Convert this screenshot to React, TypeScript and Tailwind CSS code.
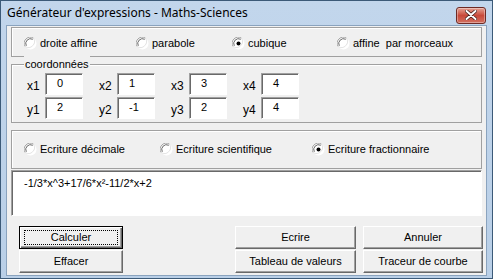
import React from 'react';

// Classic Windows dialog: "Générateur d'expressions - Maths-Sciences"

const font = { fontFamily: '"Liberation Sans", "DejaVu Sans", sans-serif' };

function Radio({ checked }: { checked?: boolean }) {
  return (
    <svg width="13" height="13" viewBox="0 0 13 13" className="shrink-0">
      <circle cx="6.5" cy="6.5" r="6" fill="#ffffff" />
      <path d="M1.2 9.5 A6 6 0 0 1 9.5 1.2" fill="none" stroke="#a0a0a0" strokeWidth="1" />
      <path d="M2.3 8.8 A4.8 4.8 0 0 1 8.8 2.3" fill="none" stroke="#696969" strokeWidth="1" />
      <path d="M9.5 1.2 A6 6 0 0 1 1.2 9.5" fill="none" stroke="#e3e3e3" strokeWidth="1" />
      {checked && <circle cx="6.5" cy="6.5" r="2" fill="#000" />}
    </svg>
  );
}

function Option({ label, checked, w }: { label: string; checked?: boolean; w: string }) {
  return (
    <div className={`flex items-center gap-[3px] ${w}`}>
      <Radio checked={checked} />
      <span className="whitespace-pre text-[11px] text-black">{label}</span>
    </div>
  );
}

function Field({ label, value }: { label: string; value: string }) {
  return (
    <div className="flex items-center">
      <span className="w-[18px] pt-[3px] text-[12px] text-black">{label}</span>
      <div className="h-[22px] w-[38px] border border-t-[#a0a0a0] border-l-[#a0a0a0] border-r-white border-b-white bg-white shadow-[inset_1px_1px_0_#696969] pl-[11px] text-[11px] leading-[18px] text-black">
        {value}
      </div>
    </div>
  );
}

function Button({ label, w, isDefault }: { label: string; w: string; isDefault?: boolean }) {
  return (
    <div
      className={`h-[23px] ${w} flex items-center justify-center bg-[#f0f0f0] text-[11px] text-black ${
        isDefault
          ? 'border border-black shadow-[inset_1px_1px_0_#fff,inset_-1px_-1px_0_#696969,inset_-2px_-2px_0_#a0a0a0]'
          : 'border border-t-white border-l-white border-r-[#696969] border-b-[#696969] shadow-[inset_-1px_-1px_0_#a0a0a0]'
      }`}
    >
      {isDefault ? (
        <div className="flex h-[15px] w-[94px] items-center justify-center border border-dotted border-black">{label}</div>
      ) : (
        label
      )}
    </div>
  );
}

export default function App() {
  return (
    <div style={font} className="flex h-[279px] w-[493px] flex-col border border-[#3c5a78] bg-gradient-to-b from-[#c2d6ec] to-[#b9cfe7]">
      {/* title bar */}
      <div className="flex h-[24px] items-center justify-between pl-[6px] pr-[6px]">
        <span className="text-[12px] text-black" style={{ fontFamily: '"Noto Sans", "Liberation Sans", sans-serif' }}>
          Générateur d'expressions - Maths-Sciences
        </span>
        <div className="mt-[4px] flex h-[17px] w-[30px] items-center justify-center rounded-[3px] border border-[#6d2a25] bg-gradient-to-b from-[#e3a194] via-[#c8493a] to-[#d26f5f] shadow-[inset_0_0_0_1px_rgba(255,255,255,0.35)]">
          <svg width="12" height="10" viewBox="0 0 12 10">
            <path d="M1.5 1 L10.5 9 M10.5 1 L1.5 9" stroke="#3b1a16" strokeWidth="3.4" strokeLinecap="round" />
            <path d="M1.5 1 L10.5 9 M10.5 1 L1.5 9" stroke="#ffffff" strokeWidth="2" strokeLinecap="round" />
          </svg>
        </div>
      </div>

      {/* client */}
      <div className="mx-[5px] mb-[2px] flex flex-1 flex-col border border-[#8aa3be] bg-[#f0f0f0] px-[4px] pt-[1px]">
        {/* type group */}
        <div className="flex h-[30px] items-center border border-[#a0a0a0] pl-[12px] pt-[2px] shadow-[inset_1px_1px_0_#fff]">
          <Option label="droite affine" w="w-[112px]" />
          <Option label="parabole" w="w-[96px]" />
          <Option label="cubique" w="w-[105px]" checked />
          <Option label="affine  par morceaux" w="w-[130px]" />
        </div>

        {/* coordinates group */}
        <div className="relative mt-[7px] h-[59px] border border-[#a0a0a0] shadow-[inset_1px_1px_0_#fff]">
          <span className="absolute left-[12px] top-[-9px] bg-[#f0f0f0] px-[1px] text-[11px] text-black">coordonnées</span>
          <div className="flex gap-[16px] pl-[15px] pt-[8px]">
            <div className="flex flex-col gap-[2px]">
              <Field label="x1" value="0" />
              <Field label="y1" value="2" />
            </div>
            <div className="flex flex-col gap-[2px]">
              <Field label="x2" value="1" />
              <Field label="y2" value="-1" />
            </div>
            <div className="flex flex-col gap-[2px]">
              <Field label="x3" value="3" />
              <Field label="y3" value="2" />
            </div>
            <div className="flex flex-col gap-[2px]">
              <Field label="x4" value="4" />
              <Field label="y4" value="4" />
            </div>
          </div>
        </div>

        {/* notation group */}
        <div className="mt-[7px] flex h-[39px] items-center border border-[#a0a0a0] pl-[12px] shadow-[inset_1px_1px_0_#fff]">
          <Option label="Ecriture décimale" w="w-[136px]" />
          <Option label="Ecriture scientifique" w="w-[152px]" />
          <Option label="Ecriture fractionnaire" w="w-[150px]" checked />
        </div>

        {/* result */}
        <div className="mt-[1px] h-[46px] border border-t-[#a0a0a0] border-l-[#a0a0a0] border-r-white border-b-white bg-white pl-[12px] pt-[4px] text-[11px] text-black shadow-[inset_1px_1px_0_#696969]">
          -1/3*x^3+17/6*x²-11/2*x+2
        </div>

        {/* buttons */}
        <div className="mt-[10px] flex pl-[8px]">
          <div className="flex flex-col gap-[1px]">
            <Button label="Calculer" w="w-[104px]" isDefault />
            <Button label="Effacer" w="w-[104px]" />
          </div>
          <div className="ml-[112px] flex flex-col gap-[1px]">
            <Button label="Ecrire" w="w-[121px]" />
            <Button label="Tableau de valeurs" w="w-[121px]" />
          </div>
          <div className="ml-[7px] flex flex-col gap-[1px]">
            <Button label="Annuler" w="w-[120px]" />
            <Button label="Traceur de courbe" w="w-[120px]" />
          </div>
        </div>
      </div>
    </div>
  );
}
